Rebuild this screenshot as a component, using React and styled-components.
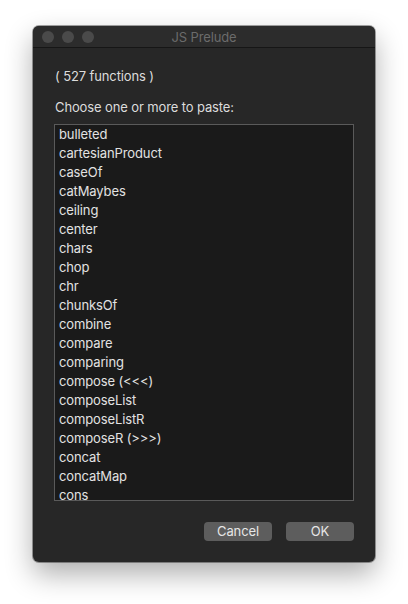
import React from "react";
import styled, { createGlobalStyle } from "styled-components";

const Global = createGlobalStyle`
  html, body { margin: 0; padding: 0; background: #ffffff; }
  body { font-family: Inter, "Liberation Sans", sans-serif; -webkit-font-smoothing: antialiased; letter-spacing: -0.12px; }
`;

const Stage = styled.div`
  width: 408px;
  height: 604px;
  padding: 26px 0 0 33px;
  box-sizing: border-box;
`;

const Window = styled.div`
  width: 342px;
  height: 536px;
  background: #272727;
  border-radius: 6px;
  box-shadow: 0 0 0 1px rgba(0, 0, 0, 0.35), 0 12px 28px rgba(0, 0, 0, 0.32);
  display: flex;
  flex-direction: column;
  overflow: hidden;
`;

const TitleBar = styled.div`
  height: 21px;
  flex: none;
  background: #2c2c2c;
  border-bottom: 1px solid #161616;
  display: flex;
  align-items: center;
  padding-left: 9px;
  position: relative;
`;

const Light = styled.span`
  width: 12px;
  height: 12px;
  border-radius: 50%;
  background: #4a4a4a;
  margin-right: 8px;
`;

const Title = styled.div`
  position: absolute;
  left: 0;
  right: 0;
  top: 0;
  bottom: 0;
  display: flex;
  align-items: center;
  justify-content: center;
  color: #6b6b6b;
  font-size: 13px;
`;

const Body = styled.div`
  flex: 1;
  display: flex;
  flex-direction: column;
  padding: 20px 20px 0 21px;
`;

const Label = styled.div`
  color: #dcdcdc;
  font-size: 13px;
  line-height: 16px;
  margin-bottom: ${(p) => p.$mb}px;
  padding-left: 1px;
`;

const List = styled.div`
  width: 300px;
  height: 377px;
  box-sizing: border-box;
  border: 1px solid #5a5a5a;
  background: #1a1a1a;
  overflow: hidden;
`;

const Item = styled.div`
  height: 19px;
  line-height: 18px;
  padding-left: 4px;
  color: #e2e2e2;
  font-size: 13px;
  white-space: nowrap;
`;

const Buttons = styled.div`
  display: flex;
  justify-content: flex-end;
  gap: 14px;
  margin-top: 21px;
  padding-right: 1px;
`;

const Button = styled.button`
  width: 68px;
  height: 19px;
  border: none;
  border-radius: 4px;
  background: #5d5d5d;
  color: #e6e6e6;
  font-family: inherit;
  letter-spacing: inherit;
  font-size: 13px;
  padding: 0;
  line-height: 19px;
`;

const items = [
  "bulleted",
  "cartesianProduct",
  "caseOf",
  "catMaybes",
  "ceiling",
  "center",
  "chars",
  "chop",
  "chr",
  "chunksOf",
  "combine",
  "compare",
  "comparing",
  "compose (<<<)",
  "composeList",
  "composeListR",
  "composeR (>>>)",
  "concat",
  "concatMap",
  "cons",
];

export default function App() {
  return (
    <>
      <Global />
      <Stage>
        <Window>
          <TitleBar>
            <Light />
            <Light />
            <Light />
            <Title>JS Prelude</Title>
          </TitleBar>
          <Body>
            <Label $mb={15}>( 527 functions )</Label>
            <Label $mb={9}>Choose one or more to paste:</Label>
            <List>
              {items.map((it) => (
                <Item key={it}>{it}</Item>
              ))}
            </List>
            <Buttons>
              <Button>Cancel</Button>
              <Button>OK</Button>
            </Buttons>
          </Body>
        </Window>
      </Stage>
    </>
  );
}
